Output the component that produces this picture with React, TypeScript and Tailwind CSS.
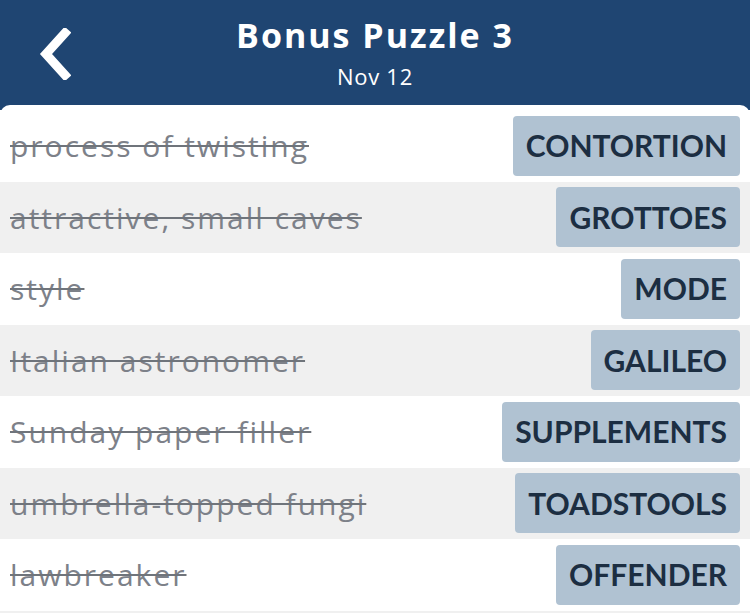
import React from 'react';

type Clue = { clue: string; answer: string };

const clues: Clue[] = [
  { clue: 'process of twisting', answer: 'CONTORTION' },
  { clue: 'attractive, small caves', answer: 'GROTTOES' },
  { clue: 'style', answer: 'MODE' },
  { clue: 'Italian astronomer', answer: 'GALILEO' },
  { clue: 'Sunday paper filler', answer: 'SUPPLEMENTS' },
  { clue: 'umbrella-topped fungi', answer: 'TOADSTOOLS' },
  { clue: 'lawbreaker', answer: 'OFFENDER' },
];

const App: React.FC = () => {
  return (
    <div className="w-[750px] h-[613px] overflow-hidden flex flex-col bg-[#1f4572] font-['Open_Sans',sans-serif]">
      {/* header */}
      <div className="relative h-[105px] shrink-0 flex flex-col items-center text-white">
        <button className="absolute left-[34px] top-[28px] w-[40px] h-[52px] flex items-center justify-center">
          <svg width="34" height="52" viewBox="0 0 34 52">
            <path d="M28 5 L9 26 L28 47" fill="none" stroke="#ffffff" strokeWidth="9" strokeLinecap="square" />
          </svg>
        </button>
        <h1 className="mt-[11px] text-[34px] leading-[48px] font-bold tracking-[2px]">Bonus Puzzle 3</h1>
        <p className="mt-[3px] text-[22px] leading-[28px] tracking-[0.7px]">Nov 12</p>
      </div>

      {/* list */}
      <div className="flex-1 flex flex-col bg-white rounded-t-[10px] pt-[5px]">
        {clues.map((c, i) => (
          <div
            key={c.answer}
            className={`h-[71.5px] shrink-0 flex items-center justify-between pl-[10px] pr-[10px] ${i % 2 === 1 ? 'bg-[#f0f0f0]' : 'bg-white'}`}
          >
            <span className="text-[30px] tracking-[2px] text-[#7d8189] line-through decoration-[2px] decoration-[#6f747b]">
              {c.clue}
            </span>
            <span className="h-[60px] flex items-center px-[13px] rounded-[4px] bg-[#b0c2d2] text-[#1c2e42] font-['Lato',sans-serif] text-[30px] font-bold">
              {c.answer}
            </span>
          </div>
        ))}
        <div className="flex-1 bg-[#f0f0f0]" />
      </div>
    </div>
  );
};

export default App;
